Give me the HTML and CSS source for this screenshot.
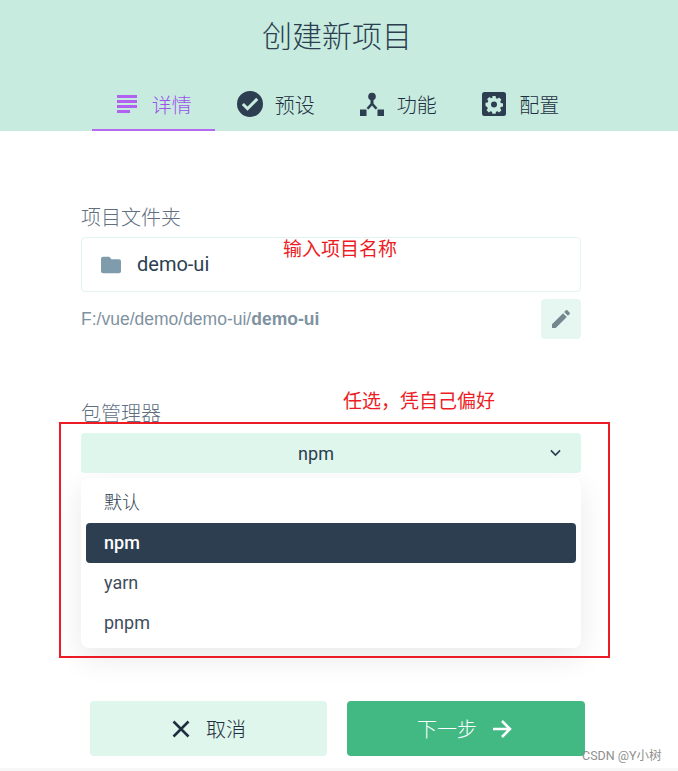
FILE: index.html
```html
<!DOCTYPE html>
<html lang="zh">
<head>
<meta charset="utf-8">
<title>创建新项目</title>
<link rel="stylesheet" href="styles.css">
</head>
<body>
<div class="page">
  <header class="head">
    <h1 class="title">创建新项目</h1>
    <nav class="tabs">
      <div class="tab active">
        <svg class="tab-icon" viewBox="0 0 24 24"><path d="M2 3h20v3H2zM2 8h20v3H2zM2 13h20v3H2zM2 18h13v3H2z" fill="currentColor"/></svg>
        <span>详情</span>
      </div>
      <div class="tab">
        <svg class="tab-icon tab-icon-big" viewBox="0 0 24 24"><path fill-rule="evenodd" d="M12 0a12 12 0 1 0 0 24a12 12 0 0 0 0-24zM9.700 18.300L4.400 13l2-2l3.300 3.300l8-8l2 2z" fill="currentColor"/></svg>
        <span>预设</span>
      </div>
      <div class="tab">
        <svg class="tab-icon" viewBox="0 0 24 24"><circle cx="12" cy="4.500" r="3.800" fill="currentColor"/><path d="M10.500 6h3v5.500l4 4.500-2 1.500-3.500-4-3.500 4-2-1.500 4-4.500z" fill="currentColor"/><path d="M0 17.500h6.500V24H0zM17.500 17.500H24V24h-6.500z" fill="currentColor"/></svg>
        <span>功能</span>
      </div>
      <div class="tab">
        <svg class="tab-icon" viewBox="0 0 24 24"><rect width="24" height="24" rx="2.500" fill="currentColor"/><path fill-rule="evenodd" fill="#c7ebdf" d="M10.400 4h3.200l.4 2.200 1.300.6 1.900-1.200 2.200 2.200-1.200 1.900.6 1.300 2.200.4v3.200l-2.200.4-.6 1.300 1.200 1.900-2.200 2.200-1.900-1.200-1.300.6-.4 2H10.400l-.4-2-1.300-.6-1.900 1.200-2.200-2.200 1.200-1.900-.6-1.300L3.500 14v-3.200l2.200-.4.600-1.300-1.200-1.900 2.200-2.200 1.900 1.200 1.300-.6zM12 9.500a3 3 0 1 0 0 6a3 3 0 0 0 0-6z"/></svg>
        <span>配置</span>
      </div>
    </nav>
  </header>

  <main class="content">
    <section class="field field-folder">
      <div class="label">项目文件夹</div>
      <div class="input">
        <svg class="folder" viewBox="0 0 24 24"><path d="M2.500 2h7.500l2.500 3h9a2.500 2.500 0 0 1 2.500 2.500v12a2.500 2.500 0 0 1-2.500 2.500h-19A2.500 2.500 0 0 1 0 19.500v-15A2.500 2.500 0 0 1 2.500 2z" fill="currentColor"/></svg>
        <span class="input-text">demo-ui</span>
      </div>
      <div class="path-row">
        <div class="path">F:/vue/demo/demo-ui/<b>demo-ui</b></div>
        <div class="edit">
          <svg class="edit-icon" viewBox="0 0 24 24"><path d="M3 17.250V21h3.750L17.810 9.940l-3.750-3.750L3 17.250zM20.710 7.040a1 1 0 0 0 0-1.410l-2.340-2.340a1 1 0 0 0-1.410 0l-1.830 1.830 3.750 3.750 1.830-1.830z" fill="currentColor"/></svg>
        </div>
      </div>
    </section>

    <section class="field field-manager">
      <div class="label">包管理器</div>
      <div class="select">
        <span>npm</span>
        <svg class="chev" viewBox="0 0 12 8"><path d="M1 1.200l5 5 5-5" fill="none" stroke="currentColor" stroke-width="1.800"/></svg>
      </div>
      <ul class="menu">
        <li class="item">默认</li>
        <li class="item selected">npm</li>
        <li class="item">yarn</li>
        <li class="item">pnpm</li>
      </ul>
    </section>

    <div class="actions">
      <div class="btn btn-cancel">
        <svg class="btn-icon" viewBox="0 0 20 20"><path d="M2.500 2.500l15 15M17.500 2.500l-15 15" fill="none" stroke="currentColor" stroke-width="2.600"/></svg>
        <span>取消</span>
      </div>
      <div class="btn btn-next">
        <span>下一步</span>
        <svg class="btn-icon" viewBox="0 0 20 20"><path d="M1 10h16M10 2l8 8-8 8" fill="none" stroke="currentColor" stroke-width="2.600"/></svg>
      </div>
    </div>
  </main>
  <div class="strip"></div>

  <div class="note note-name">输入项目名称</div>
  <div class="note note-pick">任选&#xFF0C;凭自己偏好</div>
  <div class="redbox"></div>
  <div class="mark">CSDN @Y小树</div>
</div>
</body>
</html>
```

FILE: styles.css
```css
* { box-sizing: border-box; }
html, body { margin: 0; padding: 0; background: #fff; }
body {
  font-family: Roboto, "Noto Sans CJK SC", sans-serif;
  color: #2c3e50;
}
.page {
  position: relative;
  width: 678px;
  height: 771px;
  overflow: hidden;
  display: flex;
  flex-direction: column;
}
.head {
  height: 131px;
  background: #c7ebdf;
  display: flex;
  flex-direction: column;
  align-items: center;
  flex: none;
}
.title {
  margin: 15px 4px 0 0;
  font-size: 30px;
  line-height: 44px;
  font-weight: 300;
  height: 44px;
}
.tabs {
  display: flex;
  margin: 23px 0 0 -4px;
  height: 49px;
  color: #1f2f3f;
}
.tab {
  width: 122.500px;
  height: 49px;
  display: flex;
  align-items: center;
  justify-content: center;
  gap: 13px;
  padding-bottom: 3px;
  font-size: 20px;
  font-weight: 300;
  border-bottom: 2px solid transparent;
}
.tab.active {
  color: #9d52ea;
  border-bottom-color: #b36bee;
}
.tab-icon { width: 24px; height: 24px; flex: none; color: #2c3e50; }
.tab.active .tab-icon { color: #b063f0; }
.tab-icon-big { width: 26px; height: 26px; margin-right: -1px; }
.content {
  flex: 1;
  padding: 0 97px 0 81px;
  display: flex;
  flex-direction: column;
}
.field-folder { margin-top: 72px; }
.field-manager { margin-top: 60px; }
.label {
  font-size: 20px;
  line-height: 30px;
  height: 30px;
  font-weight: 300;
  color: #5f6f7f;
}
.field-manager .label { margin-bottom: -1px; }
.input {
  margin-top: 4px;
  height: 55px;
  border: 1px solid #e2f4ef;
  border-radius: 4px;
  display: flex;
  align-items: center;
  gap: 16px;
  padding-left: 19px;
  font-size: 20px;
  color: #2c3e50;
}
.input-text { margin-bottom: 2px; }
.folder { width: 20px; height: 20px; color: #7f9cad; flex: none; }
.path-row {
  margin-top: 7px;
  display: flex;
  align-items: center;
  justify-content: space-between;
}
.path {
  font-family: "Liberation Sans", sans-serif;
  font-size: 17.500px;
  color: #7f929f;
}
.edit {
  width: 40px;
  height: 40px;
  background: #e6f7f1;
  border-radius: 4px;
  display: flex;
  align-items: center;
  justify-content: center;
}
.edit-icon { width: 24px; height: 24px; color: #75878f; }
.select {
  position: relative;
  margin-top: 5px;
  height: 40px;
  padding-right: 30px;
  background: #dff6ec;
  border-radius: 4px;
  display: flex;
  align-items: center;
  justify-content: center;
  font-size: 18px;
}
.chev {
  position: absolute;
  right: 20px;
  top: 16px;
  width: 11px;
  height: 8px;
}
.menu {
  margin: 5px 0 0;
  padding: 5px;
  list-style: none;
  height: 170px;
  background: #fff;
  border-radius: 8px;
  box-shadow: 0 10px 30px rgba(0, 0, 0, .09);
}
.item {
  height: 40px;
  line-height: 40px;
  padding-left: 18px;
  font-size: 18px;
  color: #3f4d5c;
  border-radius: 4px;
}
.item:first-child { font-weight: 300; color: #2c3e50; }
.item.selected {
  background: #2c3e50;
  color: #fff;
  font-weight: 500;
}
.actions {
  margin: 53px 0 0 9px;
  display: grid;
  grid-template-columns: 237px 238px;
  gap: 20px;
}
.btn {
  height: 55px;
  border-radius: 4px;
  display: flex;
  align-items: center;
  justify-content: center;
  gap: 15px;
  font-size: 20px;
  font-weight: 300;
}
.btn-cancel { background: #dff6ec; color: #1f2f3f; }
.btn-next { background: #42b983; color: #fff; padding-right: 3px; }
.btn-icon { width: 20px; height: 20px; flex: none; }
.strip { height: 3px; background: #f7f7f7; flex: none; }
.note {
  position: absolute;
  font-size: 19px;
  line-height: 24px;
  color: #ed1c24;
  white-space: nowrap;
}
.note-name { left: 283px; top: 238px; }
.note-pick { left: 343px; top: 390px; }
.redbox {
  position: absolute;
  left: 59px;
  top: 422px;
  width: 551px;
  height: 236px;
  border: 2px solid #ed1c24;
}
.mark {
  position: absolute;
  left: 582px;
  top: 748px;
  font-size: 12.500px;
  line-height: 16px;
  color: #8f8f8f;
  white-space: nowrap;
}
```
